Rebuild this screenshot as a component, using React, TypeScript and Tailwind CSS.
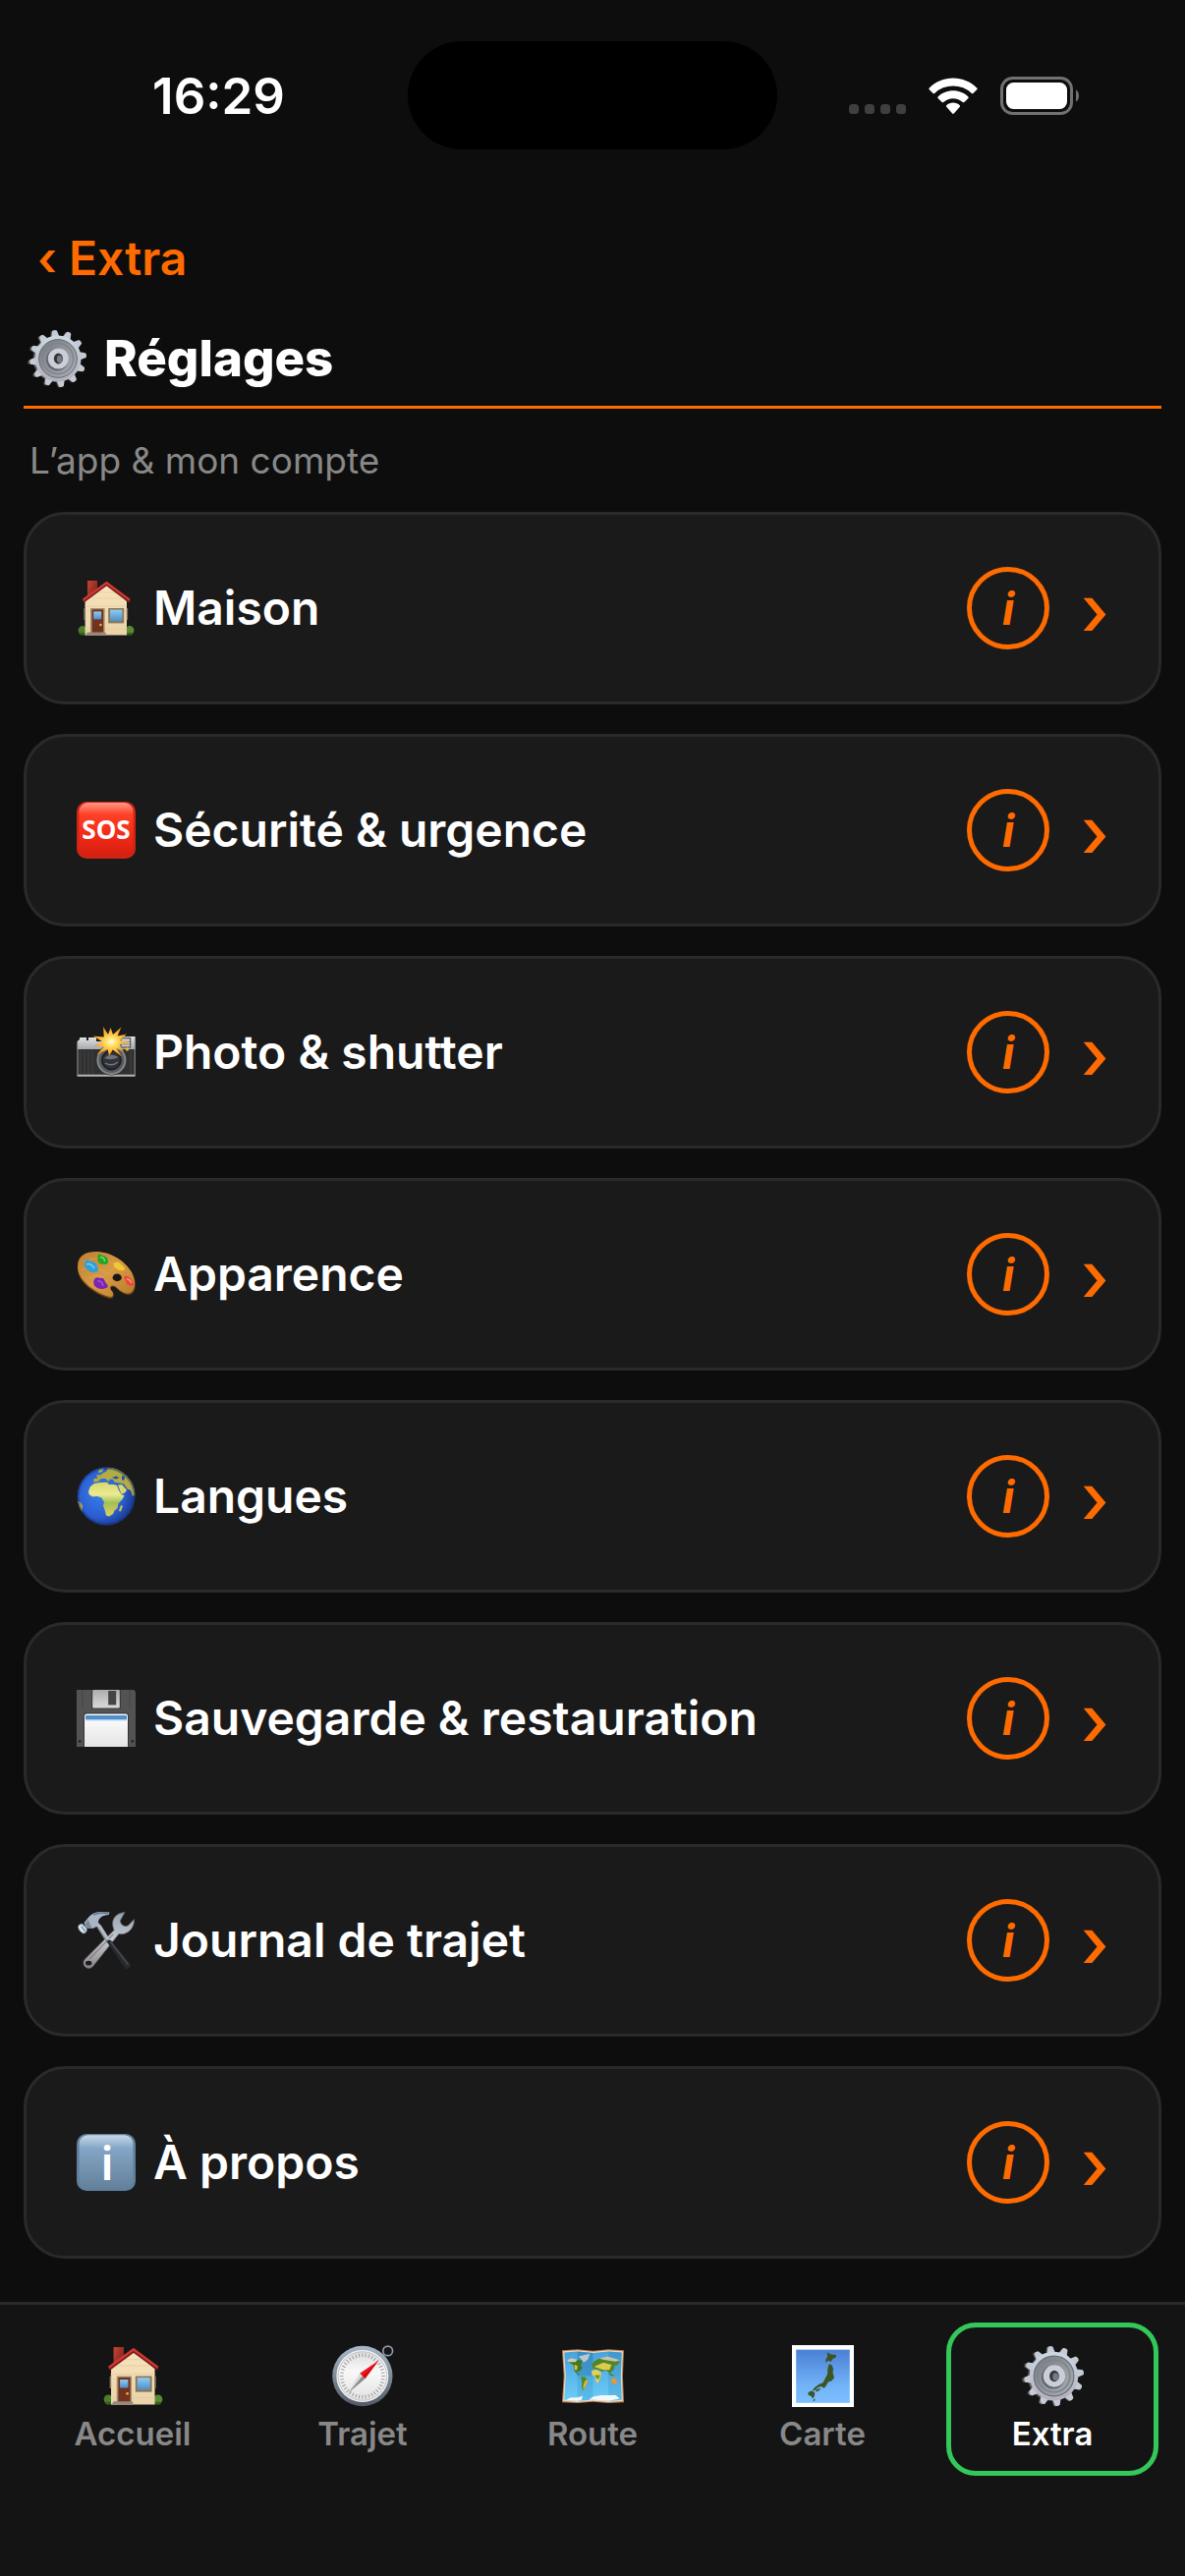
import { useState } from "react";
import type { ReactNode } from "react";

type IconProps = { size: string };

function Glyph({ size, children }: IconProps & { children: ReactNode }) {
  return (
    <svg viewBox="0 0 60 60" className={`${size} shrink-0`} aria-hidden="true">
      {children}
    </svg>
  );
}

const TEETH = [0, 30, 60, 90, 120, 150, 180, 210, 240, 270, 300, 330];

function GearIcon({ size }: IconProps) {
  return (
    <Glyph size={size}>
      <defs>
        <linearGradient id="gearFace" x1="0" y1="0" x2="0" y2="1">
          <stop offset="0" stopColor="#ccd8e2" />
          <stop offset="1" stopColor="#b4afbb" />
        </linearGradient>
        <linearGradient id="gearRing" x1="0" y1="0" x2="1" y2="1">
          <stop offset="0" stopColor="#747a80" />
          <stop offset="0.55" stopColor="#94999f" />
          <stop offset="1" stopColor="#a9afb7" />
        </linearGradient>
      </defs>
      {/* darker side of the wheel */}
      <g fill="#5b5654" transform="translate(-1.8 0.4)">
        {TEETH.map((a) => (
          <path key={a} d="M27.6 9 L29 1.6 Q31 0 33 1.6 L34.4 9Z" transform={`rotate(${a - 7} 31 30)`} />
        ))}
        <circle cx="31" cy="30" r="23.6" />
      </g>
      <g fill="url(#gearFace)">
        {TEETH.map((a) => (
          <path key={a} d="M26.6 9 L28.6 1.6 Q31 0 33.4 1.6 L35.4 9Z" fill="#c3ccd6" transform={`rotate(${a - 7} 31 30)`} />
        ))}
        <circle cx="31" cy="30" r="23.6" />
      </g>
      <circle cx="31" cy="30" r="19.4" fill="url(#gearRing)" stroke="#666c73" strokeWidth="1" />
      <circle cx="31" cy="30" r="15.6" fill="none" stroke="#7e848b" strokeWidth="1.4" />
      <circle cx="30.4" cy="31" r="11.4" fill="#66636a" />
      <circle cx="31.4" cy="30" r="10.6" fill="#c9ced8" />
      <ellipse cx="31.4" cy="30" rx="4.6" ry="5.4" fill="#3d332e" />
      <ellipse cx="32.6" cy="30.6" rx="2.8" ry="3.8" fill="#6d7d89" />
    </Glyph>
  );
}

function HouseIcon({ size }: IconProps) {
  return (
    <Glyph size={size}>
      <defs>
        <linearGradient id="houseWall" x1="0" y1="0" x2="0" y2="1">
          <stop offset="0" stopColor="#f8e4bf" />
          <stop offset="1" stopColor="#ead3a8" />
        </linearGradient>
        <linearGradient id="houseGlass" x1="0" y1="0" x2="0" y2="1">
          <stop offset="0" stopColor="#8fcdf0" />
          <stop offset="1" stopColor="#4d8fc9" />
        </linearGradient>
        <linearGradient id="houseChimney" x1="0" y1="0" x2="1" y2="1">
          <stop offset="0" stopColor="#c94434" />
          <stop offset="1" stopColor="#6b1d17" />
        </linearGradient>
      </defs>
      <path d="M11 2 H21 V14 L11 23Z" fill="url(#houseChimney)" />
      <circle cx="6" cy="52.5" r="4.4" fill="#4d7d29" />
      <circle cx="54" cy="52.5" r="4.4" fill="#598a33" />
      <path d="M2 55 h8 v2.6 H4Z M50 55 h8 l-2 2.6 H50Z" fill="#38621c" />
      <path d="M8.6 23 L30.4 4.5 L51 23 V57.5 H8.6Z" fill="url(#houseWall)" />
      <path d="M8 28 H51 M8 33 H51 M8 51 H51 M15 20 H46 M21 14 H40" stroke="#e3cb9c" strokeWidth="0.7" />
      <path d="M8 30 v12 M51.4 30 v12" stroke="#8a7763" strokeWidth="1.4" />
      <path d="M6.5 23.2 L30.4 5.6 L54 23.2" fill="none" stroke="#7d1d1c" strokeWidth="3" />
      <path d="M6.5 21.6 L30.4 4 L54 21.6" fill="none" stroke="#d43833" strokeWidth="2.2" />
      <rect x="14" y="30" width="14.6" height="26" fill="#a88f70" />
      <rect x="15.6" y="31.4" width="11.6" height="24" fill="#71321f" />
      <rect x="17.2" y="33.4" width="8" height="8" fill="url(#houseGlass)" />
      <circle cx="24.4" cy="47" r="1.3" fill="#f0b43c" />
      <path d="M11 54.6 H29 L31 58 H9Z" fill="#97897c" />
      <rect x="32.2" y="30" width="16" height="15.4" fill="#8b7658" />
      <rect x="34" y="31.6" width="12.4" height="11.6" fill="url(#houseGlass)" />
    </Glyph>
  );
}

function SosIcon({ size }: IconProps) {
  return (
    <Glyph size={size}>
      <defs>
        <linearGradient id="sosFace" x1="0" y1="0" x2="0" y2="1">
          <stop offset="0" stopColor="#ff9a85" />
          <stop offset="0.22" stopColor="#ff4028" />
          <stop offset="0.6" stopColor="#f32b18" />
          <stop offset="1" stopColor="#d41f10" />
        </linearGradient>
      </defs>
      <rect x="0" y="1" width="60" height="58" rx="10" fill="#cf2413" />
      <rect x="2.4" y="2" width="55.2" height="54.6" rx="9" fill="url(#sosFace)" />
      <text x="30" y="39" textAnchor="middle" fill="#fff" className="font-['Open_Sans',sans-serif] text-[26px] font-bold">
        SOS
      </text>
    </Glyph>
  );
}

function CameraIcon({ size }: IconProps) {
  return (
    <Glyph size={size}>
      <defs>
        <linearGradient id="camTop" x1="0" y1="0" x2="0" y2="1">
          <stop offset="0" stopColor="#e4e5e6" />
          <stop offset="1" stopColor="#a2a5a8" />
        </linearGradient>
        <radialGradient id="camFlash">
          <stop offset="0" stopColor="#fffbe0" />
          <stop offset="0.3" stopColor="#ffe062" />
          <stop offset="1" stopColor="#f58a0c" />
        </radialGradient>
      </defs>
      <path d="M3 17 V15 H10 V18 H12 V15 H20 V19 H34 L38 14 H59.6 V28 H0.6 V19Z" fill="url(#camTop)" />
      <rect x="0.6" y="27" width="59" height="26.4" fill="#303030" />
      <path d="M4 28 V53 M8 28 V53 M12 28 V53 M16 28 V53 M55 28 V53" stroke="#424242" />
      <path d="M0.6 53.8 H59.6" stroke="#b6b8ba" strokeWidth="2" />
      <path d="M1 20 V54 M59.2 16 V54" stroke="#8f9193" />
      <circle cx="35.4" cy="38" r="15.6" fill="#303234" />
      <circle cx="35.4" cy="38" r="14" fill="#56595c" stroke="#85888b" strokeWidth="2" />
      <circle cx="35.4" cy="38" r="9.6" fill="#303337" stroke="#1b1c1e" strokeWidth="1.6" />
      <path d="M28 36 Q35 30 42.6 35 Q36 39 28 36Z" fill="#6c7278" />
      <path d="M29 41 Q36 45 42 40" fill="none" stroke="#75787c" strokeWidth="1.4" />
      <rect x="45" y="15.6" width="9.6" height="9.4" fill="#d4cfc4" stroke="#5f6062" strokeWidth="1.4" />
      <path d="M46 19.4 H54 M46 22 H54" stroke="#827f78" />
      <circle cx="51.4" cy="27" r="1.7" fill="#f7ba23" />
      <path
        d="M27 4 L32 12 L34.6 5 L37 12 L45.4 4.6 L41.6 13.4 L51 11.6 L43.6 18.2 L54 19.6 L43 22.2 L48 29 L40.4 26 L46 34.4 L36.6 27.4 L33 34 L31.6 27 L20.6 32.4 L28 24 L18 23.8 L26.6 19.6 L16.6 13.6 L27.8 14.4Z"
        fill="url(#camFlash)"
      />
    </Glyph>
  );
}

function PaletteIcon({ size }: IconProps) {
  return (
    <Glyph size={size}>
      <defs>
        <linearGradient id="palWood" x1="0" y1="0" x2="1" y2="1">
          <stop offset="0" stopColor="#bd802d" />
          <stop offset="0.5" stopColor="#d79b45" />
          <stop offset="1" stopColor="#b87a2b" />
        </linearGradient>
      </defs>
      <path
        d="M1 24 C1 12 9 7.6 20 7.6 C34 7.6 50 17 56.6 29 C61 37 61 46 56 50 C53 52 49 50.6 45.6 48.6 C42 46.4 40 42.6 37 42.6 C33.6 43 34.4 46 37 48.4 C39 51.6 37.6 55 34 54.8 C22 52 1 40 1 24Z"
        fill="#704312"
      />
      <path
        d="M1 22 C1 11 9 7 20 7 C34 7 49 16 56 28 C60 36 60.4 44 55.6 48.4 C52 50.6 48 49 45 47 C41.6 44.6 40 41.4 36.6 41.4 C32.6 42 33.8 45.2 36.4 47.8 C38 50.6 36.6 53.4 33.6 53 C22 50 1 38 1 22Z"
        fill="url(#palWood)"
      />
      <path d="M6 17 Q22 10 38 19 M5 25 Q24 22 34 30 M12 34 Q22 28 32 37" fill="none" stroke="#e4af5f" strokeWidth="0.8" opacity="0.6" />
      <path d="M8 18 Q10 13 14 17 Q20 17 21 22 Q24 27 19 28 Q14 29 12 26 Q7 23 8 18Z" fill="#319fd9" />
      <path d="M10 20 Q14 18 18 24" fill="none" stroke="#7ccdf1" strokeWidth="1.6" />
      <path d="M21.4 11 Q23 8 26 11 Q31 11 32 16 Q33 20 28 20 Q22 20 21.4 16Z" fill="#22a628" />
      <path d="M24 13 Q28 12 28.6 17" fill="none" stroke="#75d968" strokeWidth="1.5" />
      <path d="M37.6 19 Q42 16 45 20 Q50 23 48.6 26 Q43 27 40 24 Q37 22 37.6 19Z" fill="#f2c832" />
      <path d="M48 32 Q53 31 56 36 Q60 40 57 42 Q51 42 50 38Z" fill="#ea493c" />
      <path d="M51 35 Q54 35 56 39" fill="none" stroke="#ff978a" strokeWidth="1.3" />
      <path d="M17.6 36 Q19 32 24 34 Q28 33 29 38 Q34 43 30 44 Q26 46 21 44 Q16 41 17.6 36Z" fill="#7a26b0" />
      <path d="M21 37 Q26 36 27 42" fill="none" stroke="#a95ad8" strokeWidth="1.4" />
      <ellipse cx="41.2" cy="33.4" rx="4.6" ry="3.8" fill="#191513" />
    </Glyph>
  );
}

function GlobeIcon({ size }: IconProps) {
  return (
    <Glyph size={size}>
      <defs>
        <radialGradient id="globeSea" cx="0.4" cy="0.45" r="0.62">
          <stop offset="0" stopColor="#3a7fe8" />
          <stop offset="0.65" stopColor="#2a5dd0" />
          <stop offset="1" stopColor="#173583" />
        </radialGradient>
        <linearGradient id="globeLand" x1="0" y1="0" x2="0" y2="1">
          <stop offset="0" stopColor="#d9d766" />
          <stop offset="0.35" stopColor="#eceb92" />
          <stop offset="0.6" stopColor="#a3bf56" />
          <stop offset="1" stopColor="#dfcf62" />
        </linearGradient>
        <clipPath id="globeClip">
          <circle cx="30.2" cy="30" r="29.4" />
        </clipPath>
      </defs>
      <g clipPath="url(#globeClip)">
        <rect width="60" height="60" fill="url(#globeSea)" />
        <path
          d="M12 25 L14 20 L18 17 L24 16 L31 15.8 L33 18 L38 18 L41 19 L43 24 L45.6 28.6 L48.6 29 L46.6 33 L42.4 37.6 L41.6 42 L38.6 44.4 L37 48 L33 50.4 L30 49.6 L28.6 44 L27 39.4 L28 36 L25.4 31.6 L21 30 L16 30.6 L12.6 28Z"
          fill="url(#globeLand)"
        />
        <path d="M45 39 L47 40 L45 45.6 L42.8 45Z" fill="#c6be52" />
        <path d="M42 18.4 L46 18 L51 23.4 L49.6 26 L45.6 28Z" fill="#dcd66b" />
        <path
          d="M17 15.6 L17.6 12 L21.6 11.6 L20 8 L24 8.6 L27 6 L30 5 L32 1 L40 0 L50 5 L58 16 L60 28 L57 30 L55 24 L51.6 22.4 L48 17.4 L43 16.4 L38 15.6 L37.4 13 L34 12.4 L32.6 15 L29 12 L24.6 12.2 L22 15Z"
          fill="#b3ac43"
        />
        <path d="M36 11 L40 9.6 L43.6 11 L40 12.6Z M46 9 L49 9.8 L48.4 14 L46 13Z" fill="#214fae" />
        <path d="M22 3 L28 1 L26 5 L22.6 6.6Z" fill="#9fae68" />
        <path d="M0 34 L4 36.6 L6 40 L5.4 45 L4 48 L0 44Z" fill="#d1be43" />
        <circle cx="30.2" cy="30" r="28.6" fill="none" stroke="#142e72" strokeOpacity="0.5" strokeWidth="2" />
      </g>
    </Glyph>
  );
}

function FloppyIcon({ size }: IconProps) {
  return (
    <Glyph size={size}>
      <defs>
        <linearGradient id="flopLabel" x1="0" y1="0" x2="0" y2="1">
          <stop offset="0" stopColor="#ffffff" />
          <stop offset="1" stopColor="#e4e4e4" />
        </linearGradient>
        <linearGradient id="flopShutter" x1="0" y1="0" x2="0" y2="1">
          <stop offset="0" stopColor="#adadad" />
          <stop offset="1" stopColor="#dadada" />
        </linearGradient>
      </defs>
      <path d="M0 1 H58 L60 3 V59 H0Z" fill="#535353" />
      <path d="M6 1 V19 M54 1 V19" stroke="#454545" />
      <path d="M15 1 H45 V20.4 H15Z" fill="#3a3a3a" />
      <rect x="16.2" y="1" width="27.6" height="18.6" rx="1" fill="url(#flopShutter)" />
      <rect x="32.2" y="2" width="8" height="14.4" fill="#444" />
      <path d="M7 59 V27 Q7 24.6 9.4 24.6 H50.6 Q53 24.6 53 27 V59Z" fill="#363636" />
      <path d="M8 59 V27.4 Q8 25.6 10 25.6 H50 Q52 25.6 52 27.4 V59Z" fill="url(#flopLabel)" />
      <rect x="9" y="27" width="42" height="4.4" fill="#4f8fcb" />
      <rect x="9" y="31.4" width="42" height="1" fill="#a8cdee" />
      <circle cx="3.2" cy="53.4" r="1.4" fill="#262626" />
      <circle cx="56.8" cy="53.4" r="1.4" fill="#262626" />
    </Glyph>
  );
}

function ToolsIcon({ size }: IconProps) {
  return (
    <Glyph size={size}>
      <defs>
        <linearGradient id="toolSteel" x1="0" y1="0" x2="0" y2="1">
          <stop offset="0" stopColor="#93a4b4" />
          <stop offset="0.5" stopColor="#c5c9cf" />
          <stop offset="1" stopColor="#8c8689" />
        </linearGradient>
      </defs>
      {/* wrench */}
      <path
        d="M49 1.4 C41 2 36 7 36.6 14 C36.8 16 37.4 18 38 19.6 L8.6 49 C5.4 52 7 58 12 58.4 C14.6 58.4 16.2 57 17.4 55.4 L43 23.4 C50 25.4 59 19 58.6 8.6 L52.6 14.8 C49 17 44 14 44.6 9.6Z"
        fill="url(#toolSteel)"
        stroke="#655b60"
        strokeWidth="0.8"
      />
      <path d="M13 49 L37 24" stroke="#66595c" strokeWidth="1.4" opacity="0.5" />
      <ellipse cx="12.2" cy="53.2" rx="3.2" ry="2.4" fill="#1c1c1c" />
      {/* hammer */}
      <path d="M21 11 L25 15 L35 31 L31 33 L19.6 15Z" fill="#b4bbc3" />
      <path d="M21 16 L32 33" stroke="#66707b" />
      <path d="M30.4 31 Q33 28 36 31 L54.6 54 Q55.6 57 52.6 59 Q50 60 48 57Z" fill="#27292c" />
      <path d="M34.6 31.6 L52.6 55" stroke="#54585e" strokeWidth="1.2" />
      <path d="M33.6 1.6 L32.6 4 Q25 4.4 22.6 9 L21 15 Q17 20 12 16.8 L9.6 17.4 L7.6 12 L13 5.4 Q18 0.6 26 1Z" fill="#a8b6c5" />
      <path d="M17 4 Q24 1 32 2.6" fill="none" stroke="#5c7893" strokeWidth="1.4" />
      <path d="M11.8 9 L8.6 13 L11 18 L15.6 18" fill="#7a8797" />
      <path d="M1.4 17 Q1.6 13 6 13.2 L10.4 18.2 Q10.6 23 6.6 23 Q3 21.4 1.4 17Z" fill="#dce6ee" stroke="#657686" strokeWidth="0.8" />
      <path d="M4.8 15.6 L8.6 21" stroke="#6a93b6" strokeWidth="1.4" />
    </Glyph>
  );
}

function InfoBoxIcon({ size }: IconProps) {
  return (
    <Glyph size={size}>
      <defs>
        <linearGradient id="infoFace" x1="0" y1="0" x2="0" y2="1">
          <stop offset="0" stopColor="#c8d9e8" />
          <stop offset="0.25" stopColor="#83a5c6" />
          <stop offset="0.6" stopColor="#7594b0" />
          <stop offset="1" stopColor="#63809b" />
        </linearGradient>
      </defs>
      <rect x="0" y="1" width="60" height="58" rx="10" fill="#5f7f9d" />
      <rect x="2.6" y="2.2" width="54.8" height="55" rx="8.6" fill="url(#infoFace)" />
      <text x="31" y="47.6" textAnchor="middle" fill="#fff" className="font-['Noto_Sans',sans-serif] text-[46px] font-semibold">
        i
      </text>
    </Glyph>
  );
}

const TICKS = Array.from({ length: 40 }, (_, i) => i * 9);

function CompassIcon({ size }: IconProps) {
  return (
    <Glyph size={size}>
      <defs>
        <linearGradient id="compRim" x1="0" y1="0" x2="0" y2="1">
          <stop offset="0" stopColor="#a9b9ca" />
          <stop offset="0.5" stopColor="#7f8a98" />
          <stop offset="1" stopColor="#525a66" />
        </linearGradient>
        <linearGradient id="compFace" x1="0" y1="0" x2="0" y2="1">
          <stop offset="0" stopColor="#dddddd" />
          <stop offset="0.4" stopColor="#f8f8f8" />
          <stop offset="1" stopColor="#e3e3e3" />
        </linearGradient>
      </defs>
      <circle cx="54" cy="5.6" r="4.6" fill="none" stroke="#8f9aa8" strokeWidth="1.6" />
      <circle cx="29.4" cy="30" r="29.2" fill="url(#compRim)" />
      <circle cx="29.4" cy="30" r="25.2" fill="#f5f5f5" />
      <circle cx="29.4" cy="30" r="23.6" fill="url(#compFace)" stroke="#b9b9b9" strokeWidth="0.8" />
      {TICKS.map((a) => (
        <path key={a} d="M29.4 8 V11.6" stroke="#9a9a9a" strokeWidth="0.9" transform={`rotate(${a} 29.4 30)`} />
      ))}
      <path d="M45 15 L26.8 27.4 L31.8 32.6Z" fill="#f4141c" />
      <path d="M45 15 L29.4 30 L31.8 32.6Z" fill="#d20b12" />
      <path d="M15.6 46.4 L26.8 27.4 L31.8 32.6Z" fill="#d9d9d9" />
      <path d="M15.6 46.4 L29.4 30 L31.8 32.6Z" fill="#8b8b86" />
    </Glyph>
  );
}

function WorldMapIcon({ size }: IconProps) {
  return (
    <Glyph size={size}>
      <defs>
        <linearGradient id="mapSea" x1="0" y1="0" x2="0" y2="1">
          <stop offset="0" stopColor="#4aa3da" />
          <stop offset="1" stopColor="#6ccdf8" />
        </linearGradient>
      </defs>
      <path d="M0 5 L15 4 L30 5.4 L45 4 L60 5 L59 30 L60 55.4 L45 56.2 L30 55 L15 56.2 L0 55.4 L1.6 30Z" fill="#b98256" />
      <path d="M1 6 L15 5 L30 6.4 L45 5 L59 6 L58 30 L59 54.4 L45 55.2 L30 54 L15 55.2 L1 54.4 L2.6 30Z" fill="#ecd9be" />
      <path d="M2.2 7.2 L15 6.2 L30 7.6 L45 6.2 L57.8 7.2 L57 30 L57.8 53.2 L45 54 L30 52.8 L15 54 L2.2 53.2 L3.6 30Z" fill="url(#mapSea)" />
      <path d="M15 6.2 L30 7.6 V30 H15Z" fill="#2778ab" opacity="0.5" />
      <path d="M45 6.2 L57.8 7.2 L57 30 H45Z" fill="#2778ab" opacity="0.25" />
      <path d="M15 30 H30 V52.8 L15 54Z M45 30 H57 L57.8 53.2 L45 54Z" fill="#2b87be" opacity="0.25" />
      <path d="M16 11 L27 8.4 L25 14 L21 17 L18 13Z" fill="#b9c8d2" />
      <path d="M5 16 L9 13.6 L20 15 L18 20 L20 22 L17 25 L14 26 L17 29 L15 28.6 L12 25 L11 19Z" fill="#40771f" />
      <path d="M12 19 L15 20 L14.6 24 L12.4 24Z" fill="#e7c035" />
      <path d="M5 14.6 L9 12.6 L15 14 L13 16.4 L6 16.4Z" fill="#c9cdb8" />
      <path d="M18 30.6 L22 31 L25 34 L23 38 L20.6 44 L19 42 L19.4 36Z" fill="#4d8a24" />
      <path d="M22.6 34 L25.4 33.6 L23 39 L20.4 43.4 L20.6 39Z" fill="#f2b230" />
      <path d="M29 19 L31 15.6 L36 13 L46 12.6 L56 15.6 L54 19 L51 20 L50 24 L46 27.6 L43 24.6 L39 25.6 L36 24 L30 23Z" fill="#55832a" />
      <path d="M31 21 L40 17 L48 19 L46 24 L40 24Z" fill="#d9cd4c" />
      <path d="M36 13 L44 11 L56 14.6 L52 16 L42 14.6Z" fill="#c3c6ae" />
      <path d="M28.6 25 L33 23.6 L38 26.6 L37.6 30 L35 36.6 L33 36 L32 30 L29 29Z" fill="#e9cf55" />
      <path d="M32 29 L37 29 L35.4 33 L33 32Z" fill="#629a2b" />
      <path d="M47.6 33 L51 31.6 L53.6 35.4 L52 38 L48 36.4Z" fill="#f0952a" />
      <path d="M46 28 L50 29.6" stroke="#3c8124" strokeWidth="1.4" />
      <path d="M4 53 L8 51 L15 50.6 L20 49.4 L19 53 L15 54Z M26 53 L30 50 L38 48.6 L52 48.6 L56 52 L45 54 L30 52.8Z" fill="#f4f8fa" />
    </Glyph>
  );
}

function JapanIcon({ size }: IconProps) {
  return (
    <Glyph size={size}>
      <defs>
        <linearGradient id="japanSea" x1="0" y1="0" x2="0" y2="1">
          <stop offset="0" stopColor="#4b80d4" />
          <stop offset="0.7" stopColor="#73b4f8" />
          <stop offset="1" stopColor="#7dbfff" />
        </linearGradient>
      </defs>
      <rect width="60" height="60" fill="#fff" />
      <rect x="4" y="4.4" width="52" height="51.6" fill="url(#japanSea)" />
      <g fill="#3d5524">
        <path d="M34 7 L38 9 L43 9.6 L42.6 12 L39.6 13.4 L38 16 L35 15 L33 17.4 L32.6 14 L34.4 11.4Z" />
        <path d="M36 18.4 L38.4 19 L40 22.4 L39.6 27 L41 31.6 L38.6 34.6 L35 36 L33 39.6 L31 42 L28.6 40 L25.4 41 L22.4 43.6 L19.6 44.6 L21.6 41.4 L26 38 L30 36.4 L32 32.6 L34.4 28 L34.6 22.6Z" />
        <path d="M23 43.4 L27.6 41.6 L27 43.6 L23.6 45.4Z" />
        <path d="M15.6 46 L18.6 44.4 L22 45.6 L22 49 L20 52 L18.6 49.4 L16 48.6Z" />
        <path d="M21 52.4 L22.4 52 L22 54 L20.6 54.4Z" />
      </g>
    </Glyph>
  );
}

const SECTIONS = [
  { label: "Maison", Icon: HouseIcon },
  { label: "Sécurité & urgence", Icon: SosIcon },
  { label: "Photo & shutter", Icon: CameraIcon },
  { label: "Apparence", Icon: PaletteIcon },
  { label: "Langues", Icon: GlobeIcon },
  { label: "Sauvegarde & restauration", Icon: FloppyIcon },
  { label: "Journal de trajet", Icon: ToolsIcon },
  { label: "À propos", Icon: InfoBoxIcon },
];

const TABS = [
  { label: "Accueil", Icon: HouseIcon },
  { label: "Trajet", Icon: CompassIcon },
  { label: "Route", Icon: WorldMapIcon },
  { label: "Carte", Icon: JapanIcon },
  { label: "Extra", Icon: GearIcon },
];

function StatusBar() {
  return (
    <div className="grid h-[194px] grid-cols-[1fr_376px_1fr] items-center">
      <div className="pt-0.5 pl-[30px] text-center text-[51px] leading-[60px] font-semibold">16:29</div>
      <div className="h-[110px] rounded-full bg-black" />
      <div className="flex items-center justify-end pt-0.5 pr-[106px]">
        <svg viewBox="0 0 58 40" className="mr-[23px] h-10 w-[58px]" fill="#3f3f3f" aria-hidden="true">
          <rect x="0" y="28" width="10" height="10" rx="3.5" />
          <rect x="16" y="28" width="10" height="10" rx="3.5" />
          <rect x="32" y="28" width="10" height="10" rx="3.5" />
          <rect x="48" y="28" width="10" height="10" rx="3.5" />
        </svg>
        <svg viewBox="0 0 50 38" className="mr-[23px] h-[38px] w-[50px]" fill="#fff" aria-hidden="true">
          <path d="M25 0.6 C34.4 0.6 43 4.4 49.2 10.6 Q50 11.4 49.2 12.2 L45.4 16 Q44.6 16.7 43.8 16 A27 27 0 0 0 6.2 16 Q5.4 16.7 4.6 16 L0.8 12.2 Q0 11.4 0.8 10.6 C7 4.4 15.6 0.6 25 0.6Z" />
          <path d="M25 13.2 C31 13.2 36.4 15.5 40.4 19.4 Q41.2 20.2 40.4 21 L36.4 25 Q35.6 25.7 34.8 25 A14.4 14.4 0 0 0 15.2 25 Q14.4 25.7 13.6 25 L9.6 21 Q8.8 20.2 9.6 19.4 C13.6 15.5 19 13.2 25 13.2Z" />
          <path d="M25 25.6 C27.6 25.6 30 26.6 31.8 28.2 Q32.6 29 31.8 29.8 L25.8 36.6 Q25 37.5 24.2 36.6 L18.2 29.8 Q17.4 29 18.2 28.2 C20 26.6 22.4 25.6 25 25.6Z" />
        </svg>
        <svg viewBox="0 0 82 40" className="h-10 w-[82px]" aria-hidden="true">
          <rect x="1.5" y="1.5" width="71" height="36" rx="11" fill="none" stroke="#717171" strokeWidth="3" />
          <rect x="6" y="6" width="62" height="27" rx="7.5" fill="#fff" />
          <path d="M77 13.5 C81 15 81 24 77 25.5Z" fill="#717171" />
        </svg>
      </div>
    </div>
  );
}

function SectionRow({ label, Icon }: (typeof SECTIONS)[number]) {
  return (
    <li className="flex items-center rounded-[42px] border-3 border-[#2a2a2a] bg-[#1a1a1a] px-[51px] py-[53px]">
      <button type="button" className="flex flex-1 items-center gap-[18px] text-left text-[48px] leading-[60px] font-semibold">
        <Icon size="size-[60px]" />
        {label}
      </button>
      <button
        type="button"
        aria-label={`Infos : ${label}`}
        className="flex size-[84px] items-center justify-center rounded-full border-5 border-[#ff6b00] text-[45px] leading-none font-bold text-[#ff6b00] italic"
      >
        i
      </button>
      <span className="ml-8 w-7 pt-1 text-center text-[72px] leading-[60px] font-medium text-[#ff6b00]" aria-hidden="true">
        ›
      </span>
    </li>
  );
}

export default function App() {
  const [activeTab, setActiveTab] = useState("Extra");

  return (
    <div className="flex min-h-screen flex-col bg-[#0d0d0d] font-[Inter,Roboto,sans-serif] text-white">
      <StatusBar />

      <main className="flex-1 px-6 pb-11">
        <button type="button" className="mt-[41px] block pl-[14px] text-[48px] leading-[56px] font-semibold text-[#ff6b00]">
          ‹ Extra
        </button>

        <h1 className="mt-11 flex items-center gap-[18px] border-b-3 border-[#ff6b00] pb-[18px] pl-1 text-[51px] leading-[60px] font-extrabold">
          <GearIcon size="size-[60px]" />
          Réglages
        </h1>
        <p className="mt-6 pl-[6px] text-[37px] leading-[58px] text-[#888888]">L’app & mon compte</p>

        <ul className="mt-[23px] flex flex-col gap-[30px]">
          {SECTIONS.map((s) => (
            <SectionRow key={s.label} {...s} />
          ))}
        </ul>
      </main>

      {/* Bottom tabs */}
      <nav className="flex gap-[18px] border-t-3 border-[#2a2a2a] bg-[#141414] px-[27px] pt-[18px] pb-[102px]">
        {TABS.map(({ label, Icon }) => {
          const active = label === activeTab;
          return (
            <button
              key={label}
              type="button"
              aria-current={active ? "page" : undefined}
              onClick={() => setActiveTab(label)}
              className={`flex flex-1 basis-0 flex-col items-center gap-[7px] rounded-[30px] border-5 py-[18px] text-[33px] leading-10 font-semibold ${
                active ? "border-[#34c759] text-white" : "border-transparent text-[#888888]"
              }`}
            >
              <Icon size="size-[63px]" />
              {label}
            </button>
          );
        })}
      </nav>
    </div>
  );
}
